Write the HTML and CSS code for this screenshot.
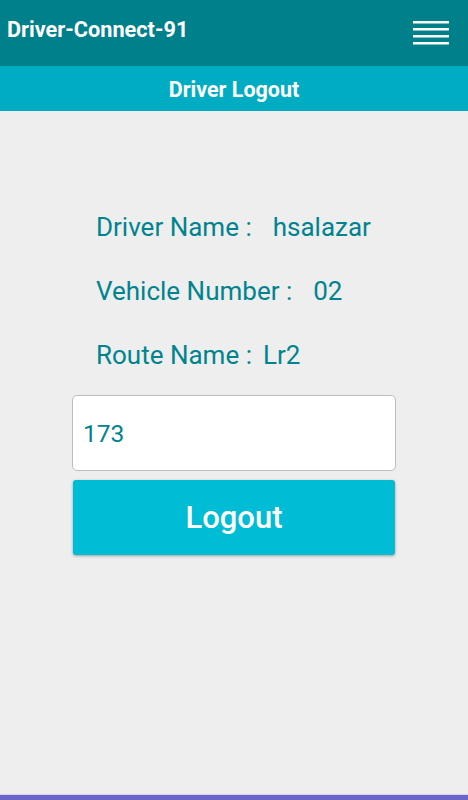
FILE: index.html
```html
<!DOCTYPE html>
<html lang="en">
<head>
    <meta charset="UTF-8">
    <meta name="viewport" content="width=device-width, initial-scale=1.0">
    <title>Driver Logout</title>
    <link rel="stylesheet" href="styles.css">
</head>
<body>

    <header class="topbar">
        <h1>Driver-Connect-91</h1>
        <button class="menu-btn" aria-label="Menu">
            <svg width="36" height="24" viewBox="0 0 36 24">
                <rect x="0" y="0" width="36" height="2.5" fill="#fff"/>
                <rect x="0" y="7" width="36" height="2.5" fill="#fff"/>
                <rect x="0" y="14" width="36" height="2.5" fill="#fff"/>
                <rect x="0" y="21" width="36" height="2.5" fill="#fff"/>
            </svg>
        </button>
    </header>

    <div class="subbar">Driver Logout</div>

    <main class="content">
        <div class="info">
            <div class="info-row">
                <span class="label">Driver Name :</span>
                <span class="value gap-md">hsalazar</span>
            </div>
            <div class="info-row">
                <span class="label">Vehicle Number :</span>
                <span class="value gap-md">02</span>
            </div>
            <div class="info-row">
                <span class="label">Route Name :</span>
                <span class="value gap-sm">Lr2</span>
            </div>
        </div>

        <form class="logout-form">
            <input type="text" class="odometer" value="173">
            <button type="submit" class="logout-btn">Logout</button>
        </form>
    </main>

    <div class="bottom-bar"></div>

</body>
</html>
```

FILE: styles.css
```css
html, body {
    height: 100%;
}
body {
    font-family: Roboto, "Noto Sans", sans-serif;
    background-color: #eeeeee;
    margin: 0;
    display: flex;
    flex-direction: column;
}
.topbar {
    background-color: #00808a;
    height: 66px;
    display: flex;
    align-items: center;
    justify-content: space-between;
    padding: 0 19px 0 7px;
    box-sizing: border-box;
}
.topbar h1 {
    color: white;
    font-size: 21.7px;
    font-weight: 700;
    margin: 0 0 7px 0;
}
.menu-btn {
    background: none;
    border: none;
    padding: 0;
    display: flex;
}
.subbar {
    background-color: #00acc1;
    height: 45px;
    color: white;
    font-size: 21.5px;
    font-weight: 700;
    display: flex;
    align-items: center;
    justify-content: center;
    padding-top: 2px;
    box-sizing: border-box;
}
.content {
    flex: 1;
    padding: 101px 72px 0 72px;
}
.info {
    padding-left: 24px;
    color: #00838f;
    font-size: 26px;
}
.info-row {
    display: flex;
    height: 64px;
}
.gap-md {
    margin-left: 21px;
}
.gap-sm {
    margin-left: 11px;
}
.logout-form {
    display: flex;
    flex-direction: column;
    gap: 9px;
    margin-top: -9px;
}
.odometer {
    height: 76px;
    box-sizing: border-box;
    border: 1px solid #bdbdbd;
    border-radius: 5px;
    background: white;
    font-family: Roboto, "Noto Sans", sans-serif;
    font-size: 24.5px;
    color: #00838f;
    padding: 0 10px;
    outline: none;
}
.logout-btn {
    height: 75px;
    margin: 0 1px;
    border: none;
    border-radius: 3px;
    background-color: #00bcd4;
    color: white;
    font-family: Roboto, "Noto Sans", sans-serif;
    font-size: 31px;
    font-weight: 500;
    box-shadow: 0 1px 3px rgba(0, 0, 0, 0.35);
    cursor: pointer;
}
.bottom-bar {
    height: 5px;
    background-color: #6a66c8;
    border-top: 1px solid #d6d6e8;
}
```
